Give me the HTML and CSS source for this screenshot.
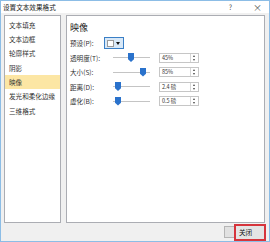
FILE: index.html
```html
<!DOCTYPE html>
<html lang="zh-CN">
<head>
  <meta charset="UTF-8" />
  <title>设置文本效果格式</title>
  <link rel="stylesheet" href="styles.css">
</head>
<body>

<div class="window">
  <div class="titlebar">
    <span class="title">设置文本效果格式</span>
    <span class="help">?</span>
    <span class="close-x">×</span>
  </div>

  <div class="dialog-body">
    <!-- Category list -->
    <ul class="nav">
      <li>文本填充</li>
      <li>文本边框</li>
      <li>轮廓样式</li>
      <li>阴影</li>
      <li class="active">映像</li>
      <li>发光和柔化边缘</li>
      <li>三维格式</li>
    </ul>

    <!-- Reflection settings -->
    <div class="pane">
      <h2 class="pane-title">映像</h2>

      <div class="row">
        <label class="preset-label">预设(P):</label>
        <button class="preset">
          <span class="swatch"></span>
          <span class="caret"></span>
        </button>
      </div>

      <div class="row">
        <label>透明度(T):</label>
        <div class="slider"><span class="thumb" style="left: 15px"></span></div>
        <div class="spin"><span class="value">45%</span><span class="arrows"></span></div>
      </div>

      <div class="row">
        <label>大小(S):</label>
        <div class="slider"><span class="thumb" style="left: 27px"></span></div>
        <div class="spin"><span class="value">85%</span><span class="arrows"></span></div>
      </div>

      <div class="row">
        <label>距离(D):</label>
        <div class="slider"><span class="thumb" style="left: 2px"></span></div>
        <div class="spin"><span class="value">2.4 磅</span><span class="arrows"></span></div>
      </div>

      <div class="row">
        <label>虚化(B):</label>
        <div class="slider"><span class="thumb" style="left: 2px"></span></div>
        <div class="spin"><span class="value">0.5 磅</span><span class="arrows"></span></div>
      </div>
    </div>
  </div>

  <div class="footer">
    <span class="btn-stub"></span>
    <button class="btn-close">关闭</button>
  </div>
</div>

</body>
</html>
```

FILE: styles.css
```css
body {
  margin: 0;
  font-family: "Noto Sans CJK SC", "Noto Sans", sans-serif;
  background-color: #ffffff;
}

.window {
  width: 270px;
  height: 242px;
  box-sizing: border-box;
  border: 1px solid #8cbde6;
  background-color: #f0f0f0;
  display: flex;
  flex-direction: column;
}

/* Title bar */
.titlebar {
  height: 12px;
  display: flex;
  align-items: center;
  background-color: #ffffff;
  font-size: 6.6px;
  color: #222;
  padding-left: 2px;
}

.titlebar .title {
  flex: 1;
}

.titlebar .help {
  font-size: 7px;
  color: #555;
  margin-right: 21px;
}

.titlebar .close-x {
  font-size: 9px;
  color: #555;
  margin-right: 7px;
}

/* Body */
.dialog-body {
  height: 210px;
  box-sizing: border-box;
  padding: 2px 4px 0 3px;
  display: flex;
  gap: 5px;
}

.nav {
  width: 57px;
  box-sizing: border-box;
  margin: 0;
  padding: 1.8px 0 0;
  list-style: none;
  background: #ffffff;
  border: 1px solid #abadb3;
  font-size: 6.6px;
  color: #333;
}

.nav li {
  height: 14.3px;
  line-height: 14.3px;
  padding-left: 4px;
  white-space: nowrap;
}

.nav li.active {
  background-color: #fce6a4;
}

.pane {
  flex: 1;
  box-sizing: border-box;
  background: #ffffff;
  border: 1px solid #abadb3;
  padding: 6px 0 0 3px;
}

.pane-title {
  margin: 0 0 1.8px;
  font-size: 9px;
  font-weight: normal;
  line-height: 12px;
  color: #222;
}

.row {
  height: 14.5px;
  display: flex;
  align-items: center;
  font-size: 6.6px;
  color: #333;
}

.row label {
  width: 43px;
  white-space: nowrap;
}

.row .preset-label {
  width: 34px;
}

/* Preset dropdown */
.preset {
  width: 20px;
  height: 12px;
  box-sizing: border-box;
  padding: 0 2px;
  border: 1px solid #3a7fc6;
  background: #d8e8f7;
  display: flex;
  align-items: center;
  gap: 2px;
}

.preset .swatch {
  width: 7px;
  height: 7px;
  box-sizing: border-box;
  border: 1px solid #9a9a9a;
  background: #ffffff;
}

.preset .caret {
  width: 0;
  height: 0;
  border-left: 2.5px solid transparent;
  border-right: 2.5px solid transparent;
  border-top: 3px solid #111;
}

/* Slider */
.slider {
  position: relative;
  width: 37px;
  height: 9px;
  margin-right: 9px;
}

.slider::before {
  content: "";
  position: absolute;
  left: 0;
  right: 0;
  top: 4px;
  height: 1px;
  background: #c4c4c4;
}

.slider .thumb {
  position: absolute;
  top: 0;
  width: 6px;
  height: 9px;
  background: #2a72cc;
  clip-path: polygon(0 0, 100% 0, 100% 70%, 50% 100%, 0 70%);
}

/* Spin box */
.spin {
  width: 40px;
  height: 10px;
  box-sizing: border-box;
  border: 1px solid #c6c6c6;
  background: #ffffff;
  display: flex;
  align-items: center;
}

.spin .value {
  flex: 1;
  font-size: 5.5px;
  padding-left: 2px;
  color: #333;
}

.spin .arrows {
  width: 8px;
  height: 100%;
  box-sizing: border-box;
  border-left: 1px solid #d6d6d6;
  position: relative;
}

.spin .arrows::before,
.spin .arrows::after {
  content: "";
  position: absolute;
  left: 2px;
  border-left: 1.5px solid transparent;
  border-right: 1.5px solid transparent;
}

.spin .arrows::before {
  top: 1px;
  border-bottom: 2px solid #444;
}

.spin .arrows::after {
  bottom: 1px;
  border-top: 2px solid #444;
}

/* Footer buttons */
.footer {
  flex: 1;
  display: flex;
  justify-content: flex-end;
  align-items: center;
  padding-right: 3px;
}

.btn-stub {
  width: 10px;
  height: 12px;
  box-sizing: border-box;
  background: #e1e1e1;
  border: 1px solid #b5b5b5;
  border-right: none;
}

.btn-close {
  width: 32px;
  height: 17px;
  box-sizing: border-box;
  padding: 0 0 0 3px;
  text-align: left;
  border: 2px solid #d6343b;
  background: #e4e4e4;
  font-family: "Noto Sans CJK SC", sans-serif;
  font-size: 6.6px;
  color: #111;
}
```
